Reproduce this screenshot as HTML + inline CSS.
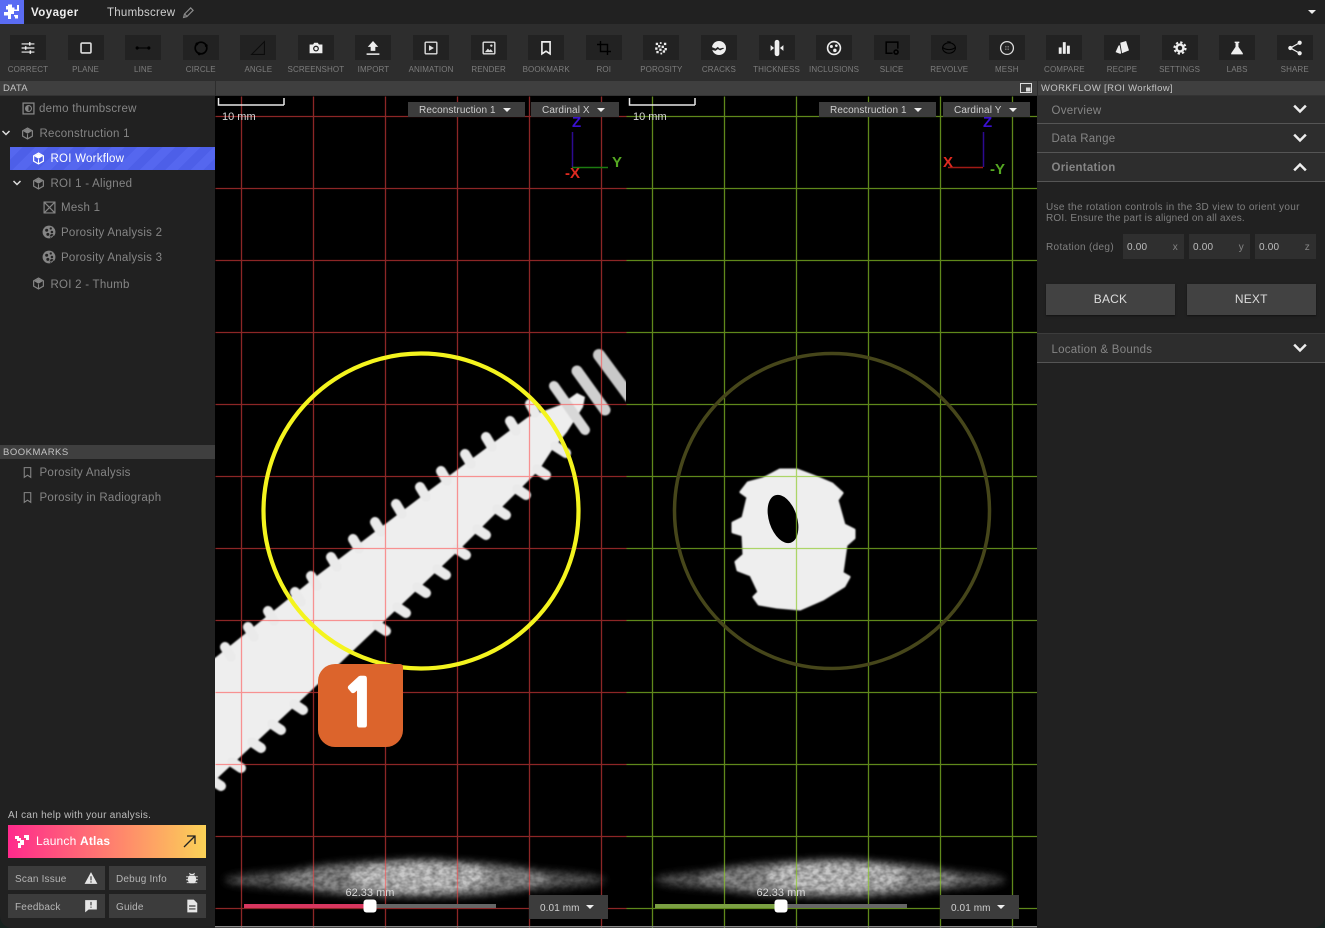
<!DOCTYPE html>
<html><head><meta charset="utf-8"><title>Voyager</title>
<style>
*{box-sizing:border-box}
html,body{margin:0;padding:0;width:1325px;height:928px;overflow:hidden;background:#16211e}
body{font-family:"Liberation Sans",sans-serif;position:relative}
#app{position:absolute;inset:0;background:#212121;border-radius:0 0 12px 12px;overflow:hidden}
.a{position:absolute;white-space:nowrap}
#tb{position:absolute;left:0;top:24px;width:1325px;height:57px;background:#2d2d2d}
#tbf{position:absolute;left:-.8px;top:0;display:flex}
.t{flex:0 0 57.59px;width:57.59px;height:57px;position:relative;text-align:center}
.t i{position:absolute;left:10.8px;top:11px;width:36px;height:25px;background:#222;display:block}
.t svg{position:absolute;left:21.8px;top:16.5px;width:14px;height:14px;overflow:visible}
.t b{position:absolute;left:-10px;right:-10px;top:41px;font:400 8px/10px "Liberation Sans",sans-serif;color:#7d7d7d;letter-spacing:.12px}
.hd{position:absolute;background:#3f3f3f;color:#c4c4c4;font-size:9.5px;line-height:15px;letter-spacing:.3px}
.tr{position:absolute;font-size:11.5px;line-height:14px;letter-spacing:.25px;color:#858585;white-space:nowrap;margin-top:1px}
.ic{position:absolute;width:13px;height:13px}
.dd{position:absolute;background:#3c3c3c;color:#cfcfcf;font-size:10px;line-height:17px;height:15px;padding-left:11px;letter-spacing:.1px;white-space:nowrap}
.car{position:absolute;width:0;height:0;border-left:4.5px solid transparent;border-right:4.5px solid transparent;border-top:4.5px solid #eee}
.rw{position:absolute;left:1037px;width:288px;background:#2d2d2d;border-bottom:1px solid #555;color:#858585;font-size:11.5px;letter-spacing:.25px;padding-left:14.5px;white-space:nowrap}
.inp{position:absolute;top:234px;width:61px;height:25px;background:#2f2f2f;color:#bdbdbd;font-size:10px;line-height:27px;padding-left:4px;letter-spacing:.2px}
.inp span{position:absolute;right:6px;color:#858585}
.bt{position:absolute;top:284px;height:31px;background:#424242;color:#dcdcdc;font-size:12px;line-height:31px;text-align:center;letter-spacing:.2px;box-shadow:0 1px 2px rgba(0,0,0,.5)}
.sb{position:absolute;width:97px;height:24px;background:#3c3c3c;color:#b5b5b5;font-size:10px;line-height:27px;padding-left:7px;letter-spacing:.2px}
.sb svg{position:absolute;right:7px;top:5px;width:14px;height:14px}
.mm{position:absolute;color:#d8d8d8;font-size:11px;line-height:13px;white-space:nowrap}
.ax{position:absolute;font-weight:700;font-size:15px;line-height:15px;white-space:nowrap}
</style></head><body>
<svg width="0" height="0" style="position:absolute"><defs>
<symbol id="cube" viewBox="0 0 24 24"><path d="M12 2L21 7V17L12 22L3 17V7Z" fill="none" stroke="currentColor" stroke-width="2.2"/><path d="M4 7.5L12 3.5L20 7.5L12 12.5ZM11 13.5V21L12 21.5L13 21V13.5L12 13Z" fill="currentColor"/></symbol>
<symbol id="por" viewBox="0 0 24 24"><circle cx="12" cy="12" r="11" fill="currentColor"/><g fill="#212121"><circle cx="8" cy="9" r="2.6"/><circle cx="15" cy="6" r="2"/><circle cx="10" cy="16" r="2.6"/><circle cx="17" cy="12" r="2.2"/><circle cx="17" cy="19" r="3.6"/></g><path d="M14.5 19L16.5 21L20.5 16.5" fill="none" stroke="currentColor" stroke-width="1.6"/></symbol>
<symbol id="bm" viewBox="0 0 24 24"><path d="M6 3H18V21L12 17L6 21Z" fill="none" stroke="currentColor" stroke-width="2"/></symbol>
<symbol id="chev" viewBox="0 0 24 24"><path d="M5 8L12 15L19 8" fill="none" stroke="currentColor" stroke-width="3"/></symbol>
<filter id="bl" x="-5%" y="-5%" width="110%" height="110%"><feGaussianBlur stdDeviation=".9"/></filter>
<filter id="hn" x="-10%" y="-60%" width="120%" height="220%"><feGaussianBlur stdDeviation="4" result="b"/><feTurbulence type="fractalNoise" baseFrequency=".16 .22" numOctaves="2" seed="4" result="n"/><feColorMatrix in="n" type="matrix" values="0 0 0 0 1 0 0 0 0 1 0 0 0 0 1 .7 0 0 0 .5" result="m"/><feComposite in="b" in2="m" operator="in"/></filter>
</defs></svg>
<div id="app">
<!-- top bar -->
<div class="a" style="left:0;top:0;width:1325px;height:24px;background:#212121"></div>
<div class="a" style="left:0;top:0;width:24px;height:24px;background:#5a6cf3">
<svg width="24" height="24" viewBox="0 0 24 24" style="display:block"><path d="M8 4.500H12V7.500H14.500V9.500H17V5H19V11H14V14H11V19H8V15.500H4V12H8V9.500H6V6H8ZM14 15H18V18.500H15V16.500H14Z" fill="#fff"/></svg></div>
<div class="a" style="left:31px;top:6px;color:#eee;font-weight:700;font-size:11.5px;line-height:14px;letter-spacing:.45px">Voyager</div>
<div class="a" style="left:107px;top:6px;color:#cfcfcf;font-size:11.5px;line-height:14px;letter-spacing:.25px">Thumbscrew</div>
<svg class="a" style="left:182px;top:6px" width="13" height="13" viewBox="0 0 24 24"><path d="M3 21L4.500 15L16 3.500L20.500 8L9 19.500ZM5 15L9 19" fill="none" stroke="#8a8a8a" stroke-width="2.2"/></svg>
<div class="car" style="left:1308px;top:10px"></div>
<!-- toolbar -->
<div id="tb"><div id="tbf">
<div class="t"><i></i><svg viewBox="0 0 24 24" fill="none" stroke="#eee" stroke-width="2"><path d="M1 5H23M1 12H23M1 19H23"/><path d="M15 2V8M8 9V15M16 16V22" stroke-width="2.6"/></svg><b>CORRECT</b></div>
<div class="t"><i></i><svg viewBox="0 0 24 24" fill="none" stroke="#ddd" stroke-width="2.8"><rect x="3.500" y="3.500" width="17" height="17" rx="2"/></svg><b>PLANE</b></div>
<div class="t"><i></i><svg viewBox="0 0 24 24" fill="#000" stroke="#000" stroke-width="1.8"><path d="M2 12H22"/><circle cx="2" cy="12" r="1.800"/><circle cx="22" cy="12" r="1.800"/></svg><b>LINE</b></div>
<div class="t"><i></i><svg viewBox="0 0 24 24" fill="#000" stroke="#000" stroke-width="2.8"><circle cx="12" cy="12" r="10" fill="none"/><circle cx="5" cy="5" r="1"/><circle cx="21" cy="8" r="1"/><circle cx="9" cy="22" r="1"/></svg><b>CIRCLE</b></div>
<div class="t"><i></i><svg viewBox="0 0 24 24" fill="none" stroke="#0c0c0c" stroke-width="1.8"><path d="M1 23H23V1Z"/></svg><b>ANGLE</b></div>
<div class="t"><i></i><svg viewBox="0 0 24 24"><path d="M1 6H7L9 3H15L17 6H23V21H1Z" fill="#eee"/><circle cx="12" cy="13" r="5" fill="#222"/><circle cx="12" cy="13" r="2.800" fill="#eee"/></svg><b>SCREENSHOT</b></div>
<div class="t"><i></i><svg viewBox="0 0 24 24"><path d="M12 0L3 10H8V17H16V10H21Z" fill="#eee"/><path d="M1 22.500H23" stroke="#eee" stroke-width="2.6"/></svg><b>IMPORT</b></div>
<div class="t"><i></i><svg viewBox="0 0 24 24" fill="none" stroke="#ddd" stroke-width="2.4"><rect x="2" y="2" width="20" height="20" rx="1.500"/><path d="M8.500 7L17 12L8.500 17Z" fill="#ddd" stroke="none"/></svg><b>ANIMATION</b></div>
<div class="t"><i></i><svg viewBox="0 0 24 24" fill="none" stroke="#ddd" stroke-width="2.4"><rect x="2" y="2" width="20" height="20" rx="1.500"/><path d="M5 19L10 13L13 16L15 14L19 19Z" fill="#ddd" stroke="none"/><circle cx="16" cy="8" r="2" fill="#ddd" stroke="none"/></svg><b>RENDER</b></div>
<div class="t"><i></i><svg viewBox="0 0 24 24" fill="none" stroke="#eee" stroke-width="2.800"><path d="M5 1.500H19V22L12 17.500L5 22Z"/></svg><b>BOOKMARK</b></div>
<div class="t"><i></i><svg viewBox="0 0 24 24" fill="none" stroke="#000" stroke-width="2.4"><path d="M6 0V18H24M0 6H18V24"/></svg><b>ROI</b></div>
<div class="t"><i></i><svg viewBox="0 0 24 24" fill="#eee"><rect x="3" y="3" width="4" height="4"/><rect x="10" y="2" width="3" height="3"/><rect x="17" y="3" width="4" height="4"/><rect x="7" y="7" width="4" height="4"/><rect x="13" y="8" width="4" height="4"/><rect x="2" y="11" width="4" height="4"/><rect x="18" y="12" width="4" height="4"/><rect x="9" y="13" width="4" height="4"/><rect x="4" y="17" width="4" height="4"/><rect x="15" y="16" width="4" height="4"/><rect x="11" y="20" width="3" height="3"/></svg><b>POROSITY</b></div>
<div class="t"><i></i><svg viewBox="0 0 24 24"><circle cx="12" cy="12" r="12" fill="#eee"/><path d="M-1 10L6 13L10 10L13 13L19 11.500L21 12.500L14 16L10 14L6 17L-1 15Z" fill="#222"/></svg><b>CRACKS</b></div>
<div class="t"><i></i><svg viewBox="0 0 24 24" fill="#eee"><rect x="8" y="-2" width="8" height="28" rx="4"/><path d="M1 7L7 12L1 17ZM23 7L17 12L23 17Z"/></svg><b>THICKNESS</b></div>
<div class="t"><i></i><svg viewBox="0 0 24 24"><circle cx="12" cy="12" r="11" fill="none" stroke="#eee" stroke-width="2.800"/><circle cx="7.500" cy="9.500" r="2.600" fill="#eee"/><circle cx="16" cy="8" r="2.300" fill="#eee"/><circle cx="13.500" cy="16" r="3" fill="#eee"/></svg><b>INCLUSIONS</b></div>
<div class="t"><i></i><svg viewBox="0 0 24 24"><path d="M13 21H2V2H22V13" fill="none" stroke="#000" stroke-width="2.600"/><circle cx="19" cy="19" r="3.400" fill="none" stroke="#000" stroke-width="2.800"/></svg><b>SLICE</b></div>
<div class="t"><i></i><svg viewBox="0 0 24 24" fill="none" stroke="#000" stroke-width="1.800"><ellipse cx="12" cy="12" rx="11" ry="9"/><path d="M1 11C7 16 17 16 23 11M9 1L15 2"/></svg><b>REVOLVE</b></div>
<div class="t"><i></i><svg viewBox="0 0 24 24"><circle cx="12" cy="12" r="11" fill="none" stroke="#ddd" stroke-width="2.200"/><path d="M9 9h2v2H9zM13 9h2v2h-2zM9 13h2v2H9zM13 13h2v2h-2z" fill="#aaa"/></svg><b>MESH</b></div>
<div class="t"><i></i><svg viewBox="0 0 24 24" fill="#eee"><rect x="3" y="11" width="5" height="11"/><rect x="10" y="2" width="5" height="20"/><rect x="17" y="8" width="5" height="14"/></svg><b>COMPARE</b></div>
<div class="t"><i></i><svg viewBox="0 0 24 24" fill="#eee"><path d="M9 3L19 0L24 16L12 21Z"/><path d="M6 8L8 7L10.500 21L9 22L1 19Z"/></svg><b>RECIPE</b></div>
<div class="t"><i></i><svg viewBox="0 0 24 24"><circle cx="12" cy="12" r="8" fill="#eee"/><circle cx="12" cy="12" r="9.600" fill="none" stroke="#eee" stroke-width="3.400" stroke-dasharray="4 3.540"/><circle cx="12" cy="12" r="3.800" fill="#222"/></svg><b>SETTINGS</b></div>
<div class="t"><i></i><svg viewBox="0 0 24 24" fill="#eee"><path d="M8 1H16V3.500H14.500V10L22 21V23H2V21L9.500 10V3.500H8Z"/></svg><b>LABS</b></div>
<div class="t"><i></i><svg viewBox="0 0 24 24" fill="#eee"><path d="M4 12L20 3M4 12L20 21" stroke="#eee" stroke-width="2.200"/><circle cx="4" cy="12" r="3.600"/><circle cx="20" cy="3" r="3.600"/><circle cx="20" cy="21" r="3.600"/></svg><b>SHARE</b></div>
</div></div>
<!-- section headers -->
<div class="hd" style="left:0;top:81px;width:1325px;height:15px;border-bottom:1px solid #333"></div>
<div class="a" style="left:215px;top:81px;width:1px;height:15px;background:#2d2d2d"></div>
<div class="a" style="left:1037px;top:81px;width:1px;height:15px;background:#2d2d2d"></div>
<div class="a" style="left:3px;top:81px;color:#c4c4c4;font-size:9.5px;line-height:16px;letter-spacing:.2px">DATA</div>
<div class="a" style="left:1041px;top:81px;color:#c4c4c4;font-size:9.5px;line-height:16px;letter-spacing:.38px">WORKFLOW [ROI Workflow]</div>
<svg class="a" style="left:1020px;top:83px" width="12" height="10" viewBox="0 0 12 10"><rect x=".5" y=".5" width="11" height="9" fill="none" stroke="#ddd"/><rect x="6" y="4.500" width="4.500" height="4" fill="#ddd"/></svg>
<!-- left panel -->
<svg class="ic" style="left:22px;top:102px" viewBox="0 0 24 24"><rect x="2" y="2" width="20" height="20" fill="none" stroke="#858585" stroke-width="2.400"/><circle cx="12" cy="12" r="5.500" fill="none" stroke="#858585" stroke-width="2"/><path d="M12 6.500A5.500 5.500 0 0 0 12 17.500Z" fill="#858585"/></svg>
<div class="tr" style="left:39px;top:101px">demo thumbscrew</div>
<svg class="a" style="left:0;top:127px;color:#ddd" width="12" height="12"><use href="#chev"/></svg>
<svg class="ic" style="left:21px;top:127px;color:#858585"><use href="#cube"/></svg>
<div class="tr" style="left:39.5px;top:126px">Reconstruction 1</div>
<div class="a" style="left:10px;top:147px;width:205px;height:23px;background:repeating-linear-gradient(135deg,#5567ef 0 9px,#4d5fe8 9px 18px)"></div>
<svg class="ic" style="left:32px;top:152px;color:#fff"><use href="#cube"/></svg>
<div class="tr" style="left:50.5px;top:151px;color:#fff">ROI Workflow</div>
<svg class="a" style="left:11px;top:177px;color:#ddd" width="12" height="12"><use href="#chev"/></svg>
<svg class="ic" style="left:32px;top:177px;color:#858585"><use href="#cube"/></svg>
<div class="tr" style="left:50.5px;top:175.500px">ROI 1 - Aligned</div>
<svg class="ic" style="left:43px;top:201px" viewBox="0 0 24 24"><path d="M2 2H22V22H2ZM2 2L22 22M22 2L2 22" fill="none" stroke="#858585" stroke-width="2.200"/></svg>
<div class="tr" style="left:61px;top:200px">Mesh 1</div>
<svg class="ic" style="left:42px;top:225px;width:14px;height:14px;color:#858585"><use href="#por"/></svg>
<div class="tr" style="left:61px;top:224.500px">Porosity Analysis 2</div>
<svg class="ic" style="left:42px;top:250px;width:14px;height:14px;color:#858585"><use href="#por"/></svg>
<div class="tr" style="left:61px;top:250px">Porosity Analysis 3</div>
<svg class="ic" style="left:32px;top:277px;color:#858585"><use href="#cube"/></svg>
<div class="tr" style="left:50.5px;top:276.500px">ROI 2 - Thumb</div>
<div class="hd" style="left:0;top:445px;width:215px;height:14px;line-height:15px;padding-left:3px;letter-spacing:.5px">BOOKMARKS</div>
<svg class="ic" style="left:21px;top:466px;color:#858585"><use href="#bm"/></svg>
<div class="tr" style="left:39.5px;top:465px">Porosity Analysis</div>
<svg class="ic" style="left:21px;top:491px;color:#858585"><use href="#bm"/></svg>
<div class="tr" style="left:39.5px;top:490px">Porosity in Radiograph</div>
<div class="a" style="left:8px;top:809px;color:#bdbdbd;font-size:10px;line-height:13px;letter-spacing:.28px">AI can help with your analysis.</div>
<div class="a" style="left:8px;top:825px;width:198px;height:33px;background:linear-gradient(90deg,#ff2a8c,#ff8c6a 60%,#fbd257)"></div>
<svg class="a" style="left:15px;top:835px" width="14" height="13" viewBox="0 0 14 13" fill="#fff"><path d="M0 1H4V3H6V5H9V10H6V13H3V8H5V6H2V4H0ZM9 0H14V5H11V3H9Z"/></svg>
<div class="a" style="left:36px;top:834px;color:#fff;font-size:12px;line-height:15px;letter-spacing:.18px">Launch <b>Atlas</b></div>
<svg class="a" style="left:183px;top:835px" width="13" height="13" viewBox="0 0 13 13" fill="none" stroke="#222" stroke-width="1.300"><path d="M1 12L12 1M4 1H12V9"/></svg>
<div class="sb" style="left:8px;top:866px">Scan Issue<svg viewBox="0 0 24 24" fill="#e6e6e6"><path d="M12 2L23 22H1ZM11 9V16H13V9ZM11 17.500V20H13V17.500Z" fill-rule="evenodd"/></svg></div>
<div class="sb" style="left:109px;top:866px">Debug Info<svg viewBox="0 0 24 24" fill="#e6e6e6"><path d="M7 8H17L19 12V17L16 21H8L5 17V12ZM8 3L10 5H14L16 3L17 5L15 7H9L7 5Z"/><path d="M2 10H22M2 15H22M3 20H21" stroke="#e6e6e6" stroke-width="1.600"/></svg></div>
<div class="sb" style="left:8px;top:894px">Feedback<svg viewBox="0 0 24 24" fill="#e6e6e6"><path d="M2 2H22V18H8L2 23ZM11 5V11H13V5ZM11 13V15H13V13Z" fill-rule="evenodd"/></svg></div>
<div class="sb" style="left:109px;top:894px">Guide<svg viewBox="0 0 24 24" fill="#e6e6e6"><path d="M4 1H15L21 7V23H4ZM7 11V13H18V11ZM7 16V18H18V16Z" fill-rule="evenodd"/></svg></div>
<!-- viewports -->
<svg class="a" style="left:215px;top:96px;background:#000" width="822" height="832" viewBox="215 96 822 832">
<defs><clipPath id="cl"><rect x="215" y="96" width="411" height="832"/></clipPath></defs>
<g clip-path="url(#cl)"><g filter="url(#bl)">
<path d="M210 662L318 575L430 490L528 417L560 405L577 393L585 397L583 407L567 432L552 450L539 470L459 550L379 626L296 705L210 785Z" fill="#eee"/>
<path d="M225 647L231 657M248 627L254 637M268 611L274 621M295 592L301 602M311 576L317 586M331 557L337 567M353 539L359 549M375 522L381 532M396 504L402 514M420 487L426 497M441 471L447 481M465 454L471 464M486 437L492 447M510 421L516 431M530 404L535 413M221 786L212 780M241 768L232 762M261 748L252 742M281 730L272 724M303 710L294 704M386 631L377 625M406 613L397 607M426 593L417 587M446 575L437 569M466 555L457 549M486 535L477 529M506 515L497 509M526 495L517 489M546 475L537 469M566 453L555 446" stroke="#eaeaea" stroke-width="10" stroke-linecap="round" fill="none"/>
<path d="M554 386L585 430" stroke="#d8d8d8" stroke-width="10" stroke-linecap="round"/>
<path d="M577 371L605 410" stroke="#d0d0d0" stroke-width="11" stroke-linecap="round"/>
<path d="M599 355L630 397" stroke="#c8c8c8" stroke-width="12" stroke-linecap="round"/>
</g></g>
<g filter="url(#bl)"><path d="M780 470H797L813 476L832 484L842 493L837 500L844 525L854 530L854 538L846 545L842 573L849 577L844 586L823 599L800 609L777 607L759 604L754 597L759 592L751 575L738 570L736 562L744 555L743 535L733 532L733 523L743 518L748 497L741 492L748 483L763 479Z" fill="#eee" stroke="#eee" stroke-width="3" stroke-linejoin="round"/></g>
<ellipse cx="783" cy="519" rx="14" ry="25" transform="rotate(-18 783 519)" fill="#000"/>
<g filter="url(#hn)"><ellipse cx="415" cy="880" rx="190" ry="12" fill="#5a5a5a"/><ellipse cx="415" cy="879" rx="135" ry="18" fill="#8a8a8a"/><ellipse cx="420" cy="876" rx="70" ry="16" fill="#c8c8c8"/></g>
<g filter="url(#hn)"><ellipse cx="830" cy="880" rx="175" ry="12" fill="#5a5a5a"/><ellipse cx="830" cy="879" rx="130" ry="18" fill="#8a8a8a"/><ellipse cx="835" cy="876" rx="70" ry="16" fill="#c8c8c8"/></g>
<g transform="translate(.5 .5)">
<path d="M241 96V928M313 96V928M385 96V928M457 96V928M529 96V928M601 96V928M215 116H626M215 188H626M215 260H626M215 332H626M215 404H626M215 476H626M215 548H626M215 620H626M215 692H626M215 764H626M215 836H626M215 908H626" stroke="rgba(255,70,70,.55)" stroke-width="1.300" fill="none"/>
<path d="M652 96V928M724 96V928M796 96V928M868 96V928M940 96V928M1012 96V928M626 116H1037M626 188H1037M626 260H1037M626 332H1037M626 404H1037M626 476H1037M626 548H1037M626 620H1037M626 692H1037M626 764H1037M626 836H1037M626 908H1037" stroke="rgba(140,200,40,.68)" stroke-width="1.300" fill="none"/>
</g>
<circle cx="421" cy="511" r="157.500" fill="none" stroke="#f4f41e" stroke-width="4.200"/>
<circle cx="832" cy="511" r="157.500" fill="none" stroke="#46461a" stroke-width="3.500"/>
<path d="M218.500 98V105H284M284 98V105M629.500 98V105H695M695 98V105" fill="none" stroke="#e8e8e8" stroke-width="1.500"/>
<path d="M572.500 132V167" stroke="#2c0a90" stroke-width="1.500"/><path d="M572 167.500H608" stroke="#1c7a10" stroke-width="1.500"/>
<path d="M983.500 132V167" stroke="#2c0a90" stroke-width="1.500"/><path d="M948 167.500H983" stroke="#a01a15" stroke-width="1.500"/>
<rect x="244" y="904" width="252" height="4" fill="#666"/><rect x="244" y="904" width="126" height="4" fill="#d8365f"/>
<rect x="655" y="904" width="252" height="4" fill="#666"/><rect x="655" y="904" width="126" height="4" fill="#7ba043"/>
<rect x="363.500" y="899.500" width="13" height="13" rx="3" fill="#fff"/>
<rect x="774.500" y="899.500" width="13" height="13" rx="3" fill="#fff"/>
<rect x="215" y="926" width="822" height="1.500" fill="#8a8a8a"/>
</svg>
<!-- overlays -->
<div class="mm" style="left:222px;top:111px">10 mm</div>
<div class="mm" style="left:633px;top:111px">10 mm</div>
<div class="dd" style="left:408px;top:102px;width:117px">Reconstruction 1<span class="car" style="left:95px;top:6px"></span></div>
<div class="dd" style="left:531px;top:102px;width:88px">Cardinal X<span class="car" style="left:66px;top:6px"></span></div>
<div class="dd" style="left:819px;top:102px;width:117px">Reconstruction 1<span class="car" style="left:95px;top:6px"></span></div>
<div class="dd" style="left:943px;top:102px;width:87px">Cardinal Y<span class="car" style="left:66px;top:6px"></span></div>
<div class="ax" style="left:572px;top:115px;color:#3a10d0">Z</div>
<div class="ax" style="left:612px;top:155px;color:#55a822">Y</div>
<div class="ax" style="left:565px;top:166px;color:#e02a20">-X</div>
<div class="ax" style="left:983px;top:115px;color:#3a10d0">Z</div>
<div class="ax" style="left:943px;top:155px;color:#e02a20">X</div>
<div class="ax" style="left:990px;top:162px;color:#55a822">-Y</div>
<div class="a" style="left:318px;top:664px;width:85px;height:83px;background:#dc642c;border-radius:17px 3px 17px 17px;color:#fff;font-family:NanumGothic,'Liberation Sans',sans-serif;font-weight:700;font-size:64px;line-height:81px;text-align:center;-webkit-text-stroke:3px #fff">1</div>
<div class="mm" style="left:345.500px;top:887px;font-size:11px">62.33 mm</div>
<div class="mm" style="left:756.500px;top:887px;font-size:11px">62.33 mm</div>
<div class="dd" style="left:529px;top:895px;width:79px;height:24px;line-height:27px;font-size:10px">0.01 mm<span class="car" style="left:57px;top:10px"></span></div>
<div class="dd" style="left:940px;top:895px;width:79px;height:24px;line-height:27px;font-size:10px">0.01 mm<span class="car" style="left:57px;top:10px"></span></div>
<!-- right panel -->
<div class="rw" style="top:96px;height:28px;line-height:31px">Overview</div>
<div class="rw" style="top:124px;height:29px;line-height:31px">Data Range</div>
<div class="rw" style="top:153px;height:29px;line-height:31px;font-weight:700">Orientation</div>
<svg class="a" style="left:1290px;top:99px;color:#eee" width="20" height="20"><use href="#chev"/></svg>
<svg class="a" style="left:1290px;top:128px;color:#eee" width="20" height="20"><use href="#chev"/></svg>
<svg class="a" style="left:1290px;top:157px;color:#eee;transform:scaleY(-1)" width="20" height="20"><use href="#chev"/></svg>
<div class="a" style="left:1046px;top:202px;color:#7f7f7f;font-size:10px;line-height:11px;letter-spacing:.34px">Use the rotation controls in the 3D view to orient your<br><span style="letter-spacing:.2px">ROI. Ensure the part is aligned on all axes.</span></div>
<div class="a" style="left:1046px;top:241px;color:#7f7f7f;font-size:10px;line-height:13px;letter-spacing:.33px">Rotation (deg)</div>
<div class="inp" style="left:1123px">0.00<span>x</span></div>
<div class="inp" style="left:1189px">0.00<span>y</span></div>
<div class="inp" style="left:1255px">0.00<span>z</span></div>
<div class="bt" style="left:1046px;width:129px">BACK</div>
<div class="bt" style="left:1186.500px;width:129.500px">NEXT</div>
<div class="rw" style="top:333px;height:30px;line-height:32px;border-top:1px solid #3c3c3c">Location &amp; Bounds</div>
<svg class="a" style="left:1290px;top:338px;color:#eee" width="20" height="20"><use href="#chev"/></svg>
</div>
</body></html>
